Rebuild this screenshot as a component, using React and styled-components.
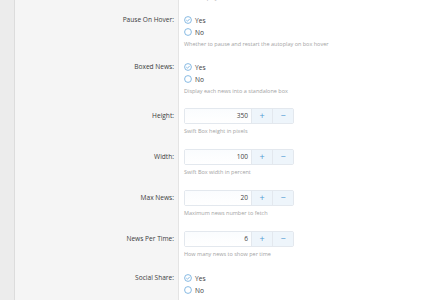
import React from 'react';
import styled, { createGlobalStyle } from 'styled-components';

const Global = createGlobalStyle`
  html, body {
    margin: 0;
    padding: 0;
    background: #fff;
    font-family: 'Open Sans', 'Noto Sans', sans-serif;
    overflow: hidden;
  }
`;

const fields = [
  { label: '', type: 'tail', help: 'Use autoplay' },
  { label: 'Pause On Hover:', type: 'radio', help: 'Whether to pause and restart the autoplay on box hover' },
  { label: 'Boxed News:', type: 'radio', help: 'Display each news into a standalone box' },
  { label: 'Height:', type: 'number', value: 350, help: 'Swift Box height in pixels' },
  { label: 'Width:', type: 'number', value: 100, help: 'Swift Box width in percent' },
  { label: 'Max News:', type: 'number', value: 20, help: 'Maximum news number to fetch' },
  { label: 'News Per Time:', type: 'number', value: 6, help: 'How many news to show per time' },
  { label: 'Social Share:', type: 'radio', help: 'Whether to show the social share buttons' },
];

function CheckIcon() {
  return (
    <svg width="8" height="8" viewBox="0 0 8 8">
      <circle cx="4" cy="4" r="3.4" fill="none" stroke="#6aa8dc" strokeWidth="0.8" />
      <path d="M2.3 4.1 L3.5 5.2 L5.7 2.9" fill="none" stroke="#6aa8dc" strokeWidth="0.8" />
    </svg>
  );
}

function EmptyIcon() {
  return (
    <svg width="8" height="8" viewBox="0 0 8 8">
      <circle cx="4" cy="4" r="3.4" fill="none" stroke="#6aa8dc" strokeWidth="0.8" />
    </svg>
  );
}

function App() {
  return (
    <Page>
      <Global />
      <Strip />
      <Form>
        {fields.map((f, i) => (
          <Row key={i} kind={f.type}>
            <Label kind={f.type}>{f.label}</Label>
            <Field>
              {f.type === 'radio' && (
                <>
                  <Option><CheckIcon /> Yes</Option>
                  <Option><EmptyIcon /> No</Option>
                </>
              )}
              {f.type === 'number' && (
                <Spinner>
                  <NumInput>{f.value}</NumInput>
                  <SpinBtn>+</SpinBtn>
                  <SpinBtn>−</SpinBtn>
                </Spinner>
              )}
              <Help kind={f.type}>{f.help}</Help>
            </Field>
          </Row>
        ))}
      </Form>
    </Page>
  );
}

const Page = styled.div`
  display: flex;
  width: 433px;
  height: 300px;
  overflow: hidden;
`;

const Strip = styled.div`
  width: 14px;
  flex-shrink: 0;
  background: #ececec;
  border-right: 1px solid #dcdcdc;
`;

const Form = styled.div`
  flex: 1;
  display: flex;
  flex-direction: column;
  margin-top: -8px;
`;

const Row = styled.div`
  display: grid;
  grid-template-columns: 164px 1fr;
  height: ${(props) => (props.kind === 'tail' ? '22px' : props.kind === 'radio' ? '47px' : '41px')};
  flex-shrink: 0;
`;

const Label = styled.div`
  background: #f5f5f5;
  border-right: 1px solid #e4e4e4;
  text-align: right;
  padding: ${(props) => (props.kind === 'number' ? '2px' : '0')} 4px 0 0;
  font-size: 6.6px;
  line-height: 12px;
  color: #3c3c3c;
`;

const Field = styled.div`
  padding-left: 5px;
  display: flex;
  flex-direction: column;
  align-items: flex-start;
`;

const Option = styled.div`
  display: flex;
  align-items: center;
  gap: 3px;
  height: 12px;
  font-size: 6.6px;
  color: #3c3c3c;
`;

const Help = styled.div`
  font-size: 5.5px;
  line-height: 12px;
  color: #a3a3a3;
  margin-top: ${(props) => (props.kind === 'number' ? '1px' : '0')};
`;

const Spinner = styled.div`
  display: flex;
  height: 16px;
  width: 110px;
  border: 1px solid #e3e8ee;
  border-radius: 2px;
  box-sizing: border-box;
`;

const NumInput = styled.div`
  flex: 1;
  background: linear-gradient(#fafcfe, #fff);
  text-align: right;
  padding-right: 3px;
  font-size: 6.6px;
  line-height: 14px;
  color: #444;
`;

const SpinBtn = styled.div`
  width: 20px;
  background: #eef5fb;
  border-left: 1px solid #e3e8ee;
  color: #4f9bd4;
  font-size: 9px;
  line-height: 14px;
  text-align: center;
`;

export default App;
